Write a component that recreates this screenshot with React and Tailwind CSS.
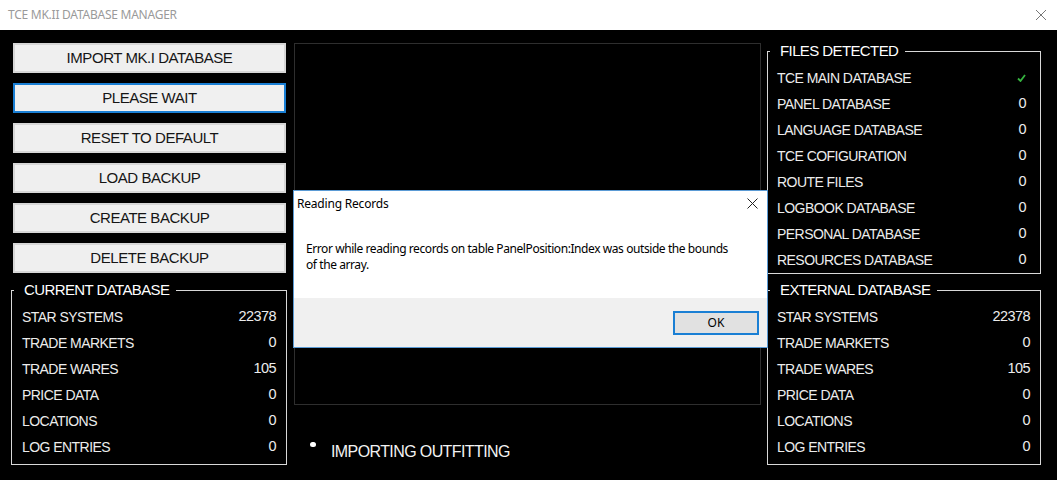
import React from "react";

const F = { fontFamily: '"Liberation Sans", Arial, sans-serif' };
const SEG = { fontFamily: '"Noto Sans", "Open Sans", sans-serif' };

function Btn({ label, focused }) {
  return (
    <div
      className={
        "ml-[2px] w-[273px] h-[30px] flex items-center justify-center text-[15px] tracking-[-0.45px] text-[#151515] " +
        (focused
          ? "border-2 border-[#1a7fd4] bg-[#f0f0f0]"
          : "border-2 border-[#d6d6d6] bg-[#efefef]")
      }
      style={F}
    >
      {label}
    </div>
  );
}

function Group({ title, rows, className, pr = "pr-[10px]", pb = "pb-[4px]", pl = "pl-[10px]" }) {
  return (
    <fieldset className={"border border-[#d8d8d8] min-w-0 " + className} style={F}>
      <legend className="ml-[2px] pl-[10px] pr-[7px] text-[15px] leading-[20px] tracking-[-0.6px] text-white">
        {title}
      </legend>
      <div className={"pt-[4px] " + pl + " " + pr + " " + pb}>
        {rows.map(([k, v]) => (
          <div key={k} className="h-[26px] flex items-center justify-between text-[14px] tracking-[-0.55px] text-[#ececec]">
            <span>{k}</span>
            <span className="text-[14.5px]">{v}</span>
          </div>
        ))}
      </div>
    </fieldset>
  );
}

const check = (
  <svg width="9" height="8" viewBox="0 0 9 8">
    <polyline points="1,4.5 3.5,7 8,1" fill="none" stroke="#35b33f" strokeWidth="1.8" />
  </svg>
);

const dbRows = [
  ["STAR SYSTEMS", "22378"],
  ["TRADE MARKETS", "0"],
  ["TRADE WARES", "105"],
  ["PRICE DATA", "0"],
  ["LOCATIONS", "0"],
  ["LOG ENTRIES", "0"],
];

const fileRows = [
  ["TCE MAIN DATABASE", check],
  ["PANEL DATABASE", "0"],
  ["LANGUAGE DATABASE", "0"],
  ["TCE COFIGURATION", "0"],
  ["ROUTE FILES", "0"],
  ["LOGBOOK DATABASE", "0"],
  ["PERSONAL DATABASE", "0"],
  ["RESOURCES DATABASE", "0"],
];

export default function App() {
  return (
    <div className="relative w-[1057px] h-[480px] overflow-hidden bg-black">
      {/* Title bar */}
      <div className="h-[30px] bg-white flex items-center justify-between pl-[8px] pr-[10px]">
        <span className="text-[12px] text-[#9a9a9a] tracking-[-0.25px]" style={SEG}>
          TCE MK.II DATABASE MANAGER
        </span>
        <svg width="12" height="12" viewBox="0 0 12 12">
          <path d="M1 1 L11 11 M11 1 L1 11" stroke="#777" strokeWidth="1" />
        </svg>
      </div>

      {/* Body */}
      <div className="flex pl-[11px] h-[450px]">
        {/* Left column */}
        <div className="w-[276px] pt-[13px] flex flex-col">
          <div className="flex flex-col gap-[10px]">
            <Btn label="IMPORT MK.I DATABASE" />
            <Btn label="PLEASE WAIT" focused />
            <Btn label="RESET TO DEFAULT" />
            <Btn label="LOAD BACKUP" />
            <Btn label="CREATE BACKUP" />
            <Btn label="DELETE BACKUP" />
          </div>
          <Group title="CURRENT DATABASE" rows={dbRows} className="mt-[7px]" />
        </div>

        {/* Center column */}
        <div className="ml-[7px] w-[467px] pt-[13px] flex flex-col">
          <div className="h-[362px] border border-[#2e2e2e]" />
          <div className="mt-[37px] h-[20px] flex items-center pl-[16px]">
            <div className="w-[6px] h-[5px] rounded-full bg-white -mt-[16px]" />
            <span className="ml-[15px] text-[16px] tracking-[-0.6px] text-[#f2f2f2]" style={F}>
              IMPORTING OUTFITTING
            </span>
          </div>
        </div>

        {/* Right column */}
        <div className="ml-[6px] w-[274px] pt-[11px] flex flex-col">
          <Group title="FILES DETECTED" rows={fileRows} pl="pl-[9px]" pr="pr-[14px]" pb="pb-0" />
          <Group title="EXTERNAL DATABASE" rows={dbRows} pl="pl-[9px]" className="mt-[6px]" />
        </div>
      </div>

      {/* Dialog */}
      <div className="absolute left-[293px] top-[190px] w-[475px] h-[158px] border border-[#5b9bd5] bg-white flex flex-col" style={SEG}>
        <div className="h-[24px] flex items-center justify-between pl-[3px] pr-[9px] pt-[1px]">
          <span className="text-[12px] text-black tracking-[-0.2px]">Reading Records</span>
          <svg width="11" height="11" viewBox="0 0 11 11">
            <path d="M0.5 0.5 L10.5 10.5 M10.5 0.5 L0.5 10.5" stroke="#222" strokeWidth="1" />
          </svg>
        </div>
        <div className="flex-1 pl-[12px] pt-[26px] text-[12px] leading-[16px] text-black tracking-[-0.42px]">
          <div>Error while reading records on table PanelPosition:Index was outside the bounds</div>
          <div>of the array.</div>
        </div>
        <div className="h-[49px] bg-[#f0f0f0] flex items-start justify-end pt-[13px] pr-[8px]">
          <div className="w-[86px] h-[24px] border-2 border-[#1a7fd4] bg-[#e1e1e1] flex items-center justify-center text-[12px] text-black">
            OK
          </div>
        </div>
      </div>
    </div>
  );
}
